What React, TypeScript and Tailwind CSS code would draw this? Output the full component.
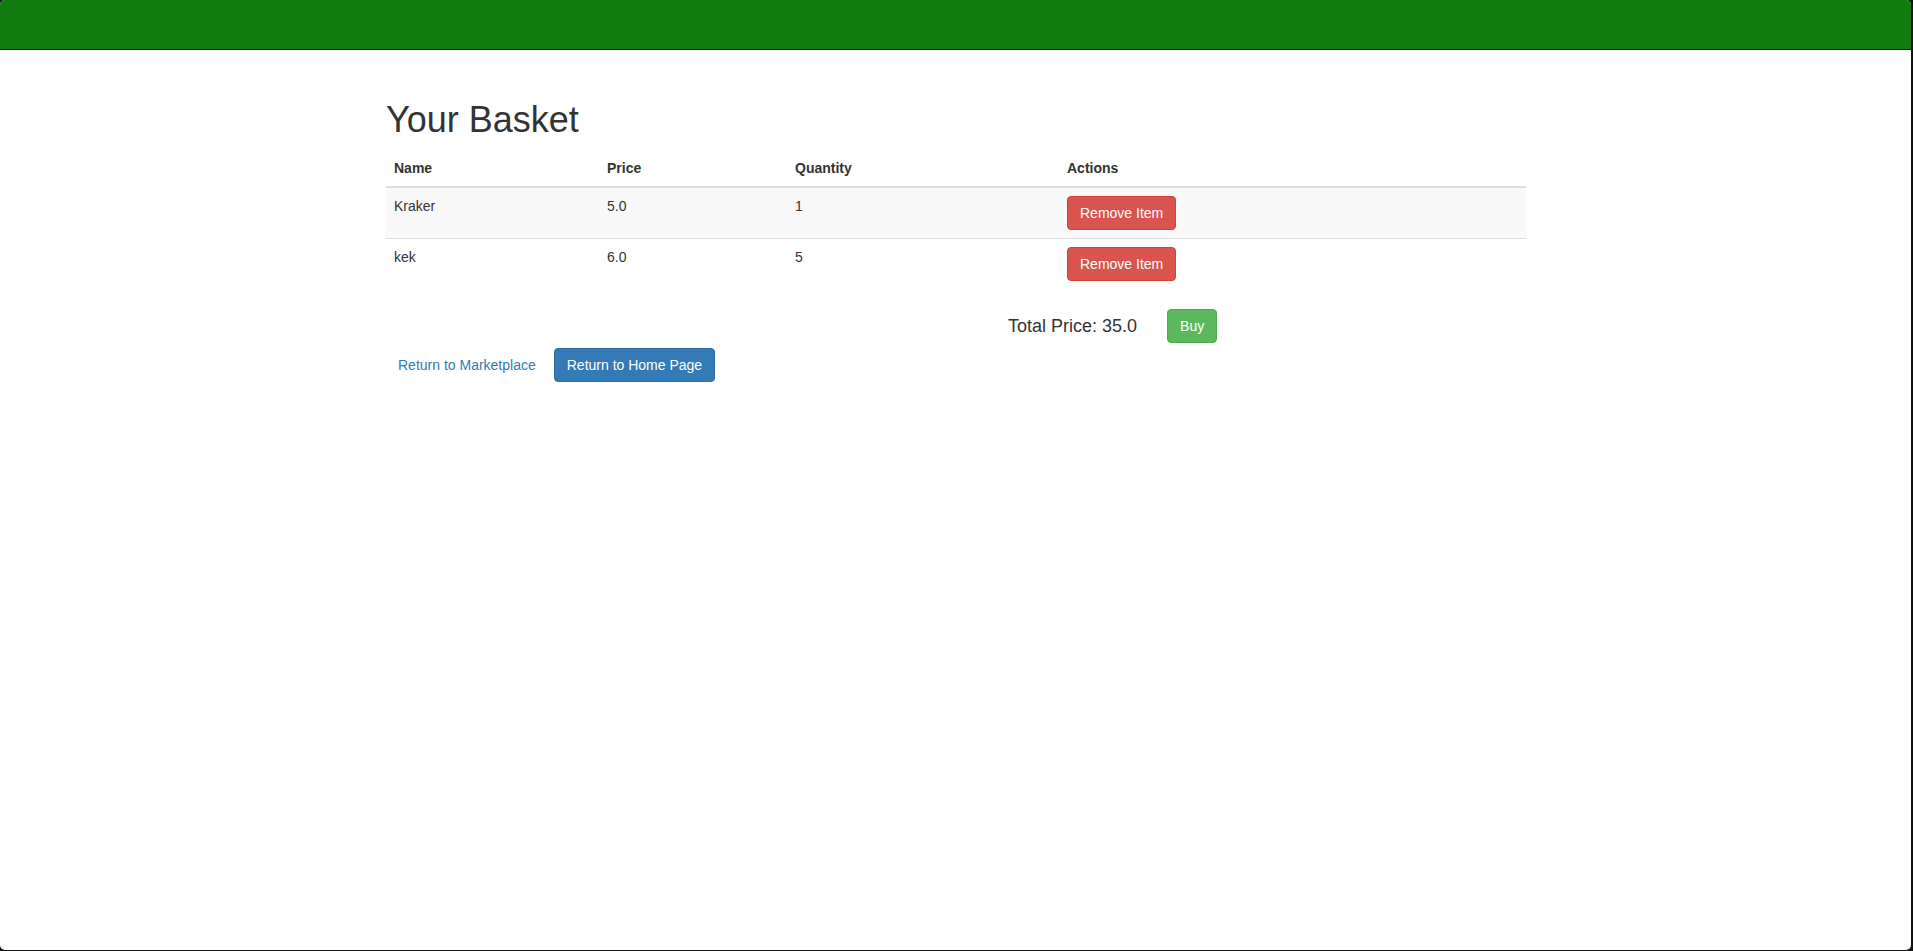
import React from 'react';

const items = [
  { name: 'Kraker', price: '5.0', quantity: 1 },
  { name: 'kek', price: '6.0', quantity: 5 },
];

export default function App() {
  return (
    <div className="h-[951px] bg-[#111] pr-[2px] pb-[1px] font-['Liberation_Sans',Arial,sans-serif] text-[14px] leading-[20px] text-[#333]">
      <div className="h-full overflow-hidden rounded-[5px] bg-white">
        <nav className="h-[50px] border-b border-[#101010] bg-[#107c10]" />
        <div className="ml-[386px] w-[1140px]">
          <h1 className="mt-[50px] mb-[10px] text-[36px] leading-[40px] font-normal">Your Basket</h1>
          <table className="w-full table-fixed border-collapse">
            <colgroup>
              <col className="w-[213px]" />
              <col className="w-[188px]" />
              <col className="w-[272px]" />
              <col />
            </colgroup>
            <thead>
              <tr>
                <th className="border-b-2 border-[#ddd] p-2 text-left font-bold">Name</th>
                <th className="border-b-2 border-[#ddd] p-2 text-left font-bold">Price</th>
                <th className="border-b-2 border-[#ddd] p-2 text-left font-bold">Quantity</th>
                <th className="border-b-2 border-[#ddd] p-2 text-left font-bold">Actions</th>
              </tr>
            </thead>
            <tbody>
              {items.map((item, i) => (
                <tr key={item.name} className={i % 2 === 0 ? 'bg-[#f9f9f9]' : ''}>
                  <td className="border-t border-[#ddd] p-2 align-top">{item.name}</td>
                  <td className="border-t border-[#ddd] p-2 align-top">{item.price}</td>
                  <td className="border-t border-[#ddd] p-2 align-top">{item.quantity}</td>
                  <td className="border-t border-[#ddd] p-2 align-top">
                    <button className="h-[34px] rounded-[4px] border border-[#d43f3a] bg-[#d9534f] px-3 text-white">Remove Item</button>
                  </td>
                </tr>
              ))}
            </tbody>
          </table>
          <div className="mt-[20px] flex items-center pl-[622px]">
            <span className="text-[18px]">Total Price: 35.0</span>
            <button className="ml-[30px] h-[34px] rounded-[4px] border border-[#4cae4c] bg-[#5cb85c] px-3 text-white">Buy</button>
          </div>
          <div className="mt-[5px] flex items-center gap-[6px]">
            <a href="#" className="px-3 leading-[34px] text-[#337ab7]">Return to Marketplace</a>
            <button className="h-[34px] rounded-[4px] border border-[#2e6da4] bg-[#337ab7] px-3 text-white">Return to Home Page</button>
          </div>
        </div>
      </div>
    </div>
  );
}
